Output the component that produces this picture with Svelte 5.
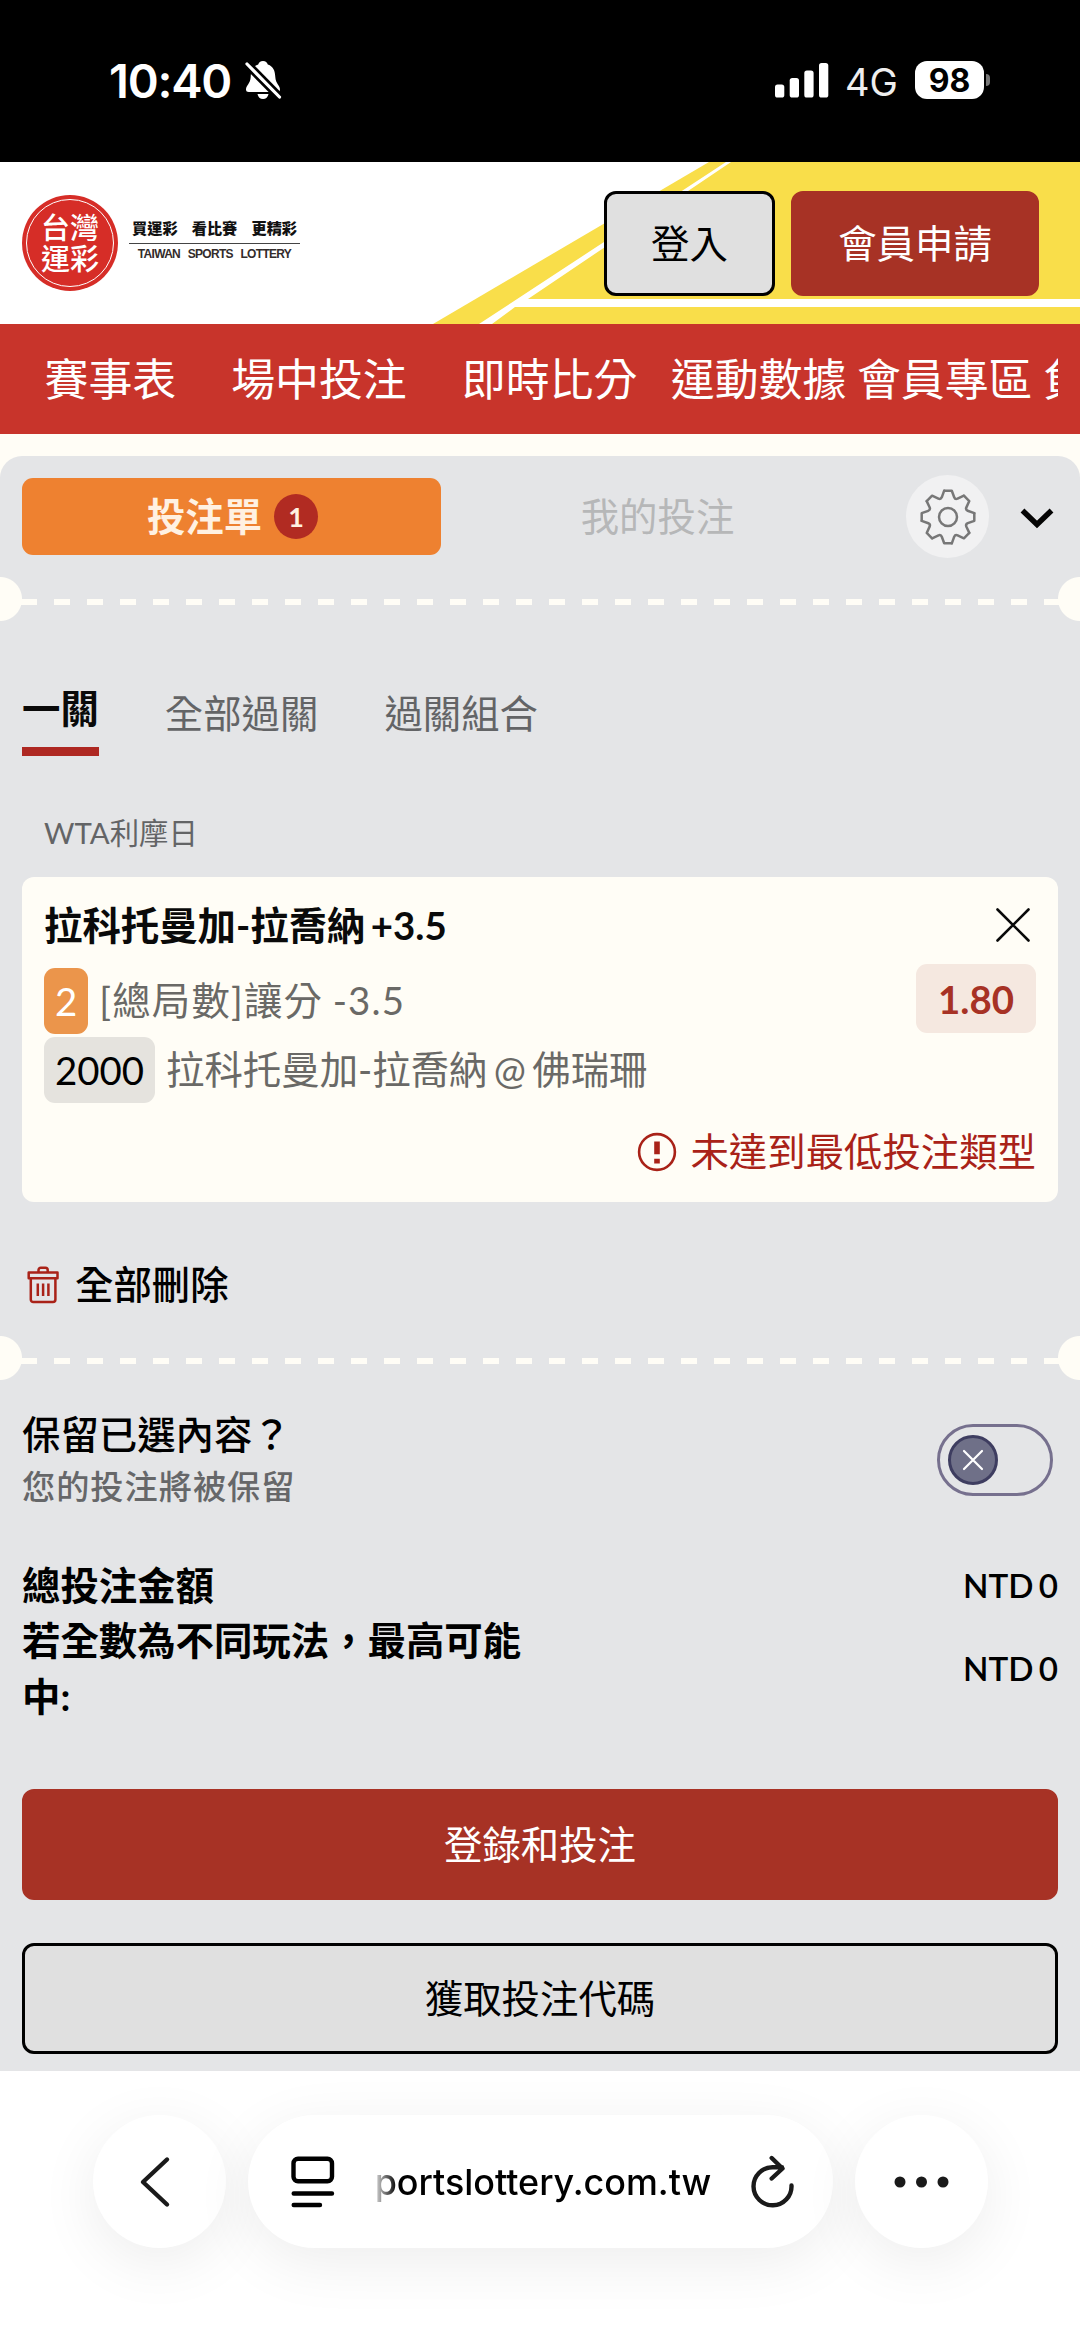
<script>
	let nav = ['賽事表', '場中投注', '即時比分', '運動數據', '會員專區', '負責任博彩']
	let types = ['一關', '全部過關', '過關組合']
	let active = 0
	let keep = false

	let bet = {
		league: 'WTA利摩日',
		pick: '拉科托曼加-拉喬納 +3.5',
		no: 2,
		market: '[總局數]讓分 -3.5',
		code: 2000,
		match: '拉科托曼加-拉喬納 @ 佛瑞珊',
		odds: '1.80'
	}

	let teeth = [0, 45, 90, 135, 180, 225, 270, 315]
</script>

<div class="phone">
	<div class="status">
		<span class="time">10:40</span>
		<svg class="bell" width="38" height="40" viewBox="0 0 38 40">
			<path d="M19 1c2.6 0 4.300 1.500 4.800 3.600C29.500 6.500 31 11 31.300 17c.3 6.500 4.700 8.500 4.700 12.500 0 1.700-1 2.500-2.800 2.500H4.800C3 32 2 31.200 2 29.500 2 25.500 6.400 23.500 6.700 17 7 11 8.500 6.500 14.200 4.600 14.700 2.500 16.400 1 19 1z" fill="#fff"/>
			<path d="M13.500 34h11c-.5 3-2.600 5-5.500 5s-5-2-5.500-5z" fill="#fff"/>
			<path d="M2.500 3.500l33 33.500" stroke="#000" stroke-width="8.500"/>
			<path d="M3 4l32.500 33" stroke="#fff" stroke-width="3.200" stroke-linecap="round"/>
		</svg>
		<svg class="signal" width="54" height="35" viewBox="0 0 54 35" fill="#fff">
			<rect x="0" y="21.500" width="9.300" height="13" rx="2.600"/>
			<rect x="14.700" y="15" width="9.300" height="19.500" rx="2.600"/>
			<rect x="29.300" y="7.500" width="9.300" height="27" rx="2.600"/>
			<rect x="44" y="0" width="9.300" height="34.500" rx="2.600"/>
		</svg>
		<span class="net">4G</span>
		<span class="battery">98</span>
		<span class="nub"></span>
	</div>

	<header>
		<svg class="stripes" width="1080" height="162" viewBox="0 0 1080 162">
			<path d="M433 162L709 0h371v162z" fill="#f9de4a"/>
			<path d="M479 162L726 0h5L528 137h552v8H515l-23 17z" fill="#fff"/>
		</svg>
		<div class="seal"><span>台灣</span><span>運彩</span></div>
		<div class="slogan">
			<div class="zh"><span>買運彩</span><span>看比賽</span><span>更精彩</span></div>
			<div class="en">TAIWAN SPORTS LOTTERY</div>
		</div>
		<button class="btn login">登入</button>
		<button class="btn red join">會員申請</button>
	</header>

	<nav>
		<ul>
			{#each nav as item}
			<li>{item}</li>
			{/each}
		</ul>
	</nav>

	<main>
		<div class="slip_head">
			<div class="tab on">投注單 <span class="count">1</span></div>
			<div class="tab">我的投注</div>
			<div class="gear">
				<svg width="60" height="60" viewBox="-30 -30 60 60" fill="none" stroke="#777" stroke-width="2.500" stroke-linejoin="round" stroke-linecap="round">
					<circle r="9"/>
					{#each teeth as deg}
					<path transform="rotate({deg})" d="M-3.800-26.300h7.600L6.200-19.800Q7.100-17.400 9.500-18.300L15.900-21.300"/>
					{/each}
				</svg>
			</div>
			<svg class="fold" width="34" height="22" viewBox="0 0 34 22">
				<path d="M2.500 2.500L17 16.500 31.500 2.500" fill="none" stroke="#050505" stroke-width="5.500"/>
			</svg>
		</div>

		<div class="tear"></div>

		<div class="types">
			{#each types as type, i}
			<div class="type" class:active={active === i}>{type}</div>
			{/each}
		</div>

		<div class="league">{bet.league}</div>
		<div class="card">
			<div class="row title">
				<span>{bet.pick}</span>
				<svg width="34" height="34" viewBox="0 0 34 34">
					<path d="M1.500 1.500l31 31M32.500 1.500l-31 31" stroke="#0a0a0a" stroke-width="2.600" stroke-linecap="round"/>
				</svg>
			</div>
			<div class="row">
				<span class="tag orange">{bet.no}</span>
				<span class="info wide">{bet.market}</span>
				<span class="odds">{bet.odds}</span>
			</div>
			<div class="row">
				<span class="tag">{bet.code}</span>
				<span class="info">{bet.match}</span>
			</div>
			<div class="warn">
				<svg width="40" height="40" viewBox="0 0 40 40">
					<circle cx="20" cy="20" r="17.900" fill="none" stroke="#a92218" stroke-width="2.600"/>
					<path d="M17.200 9.500h5.600v12.800h-5.600zM17.200 26.800h5.600v4.800h-5.600z" fill="#a92218"/>
				</svg>
				<span>未達到最低投注類型</span>
			</div>
		</div>

		<div class="clear">
			<svg width="32" height="38" viewBox="0 0 32 38" fill="none" stroke="#a92218" stroke-width="2.500" stroke-linejoin="round">
				<path d="M1.700 6.500h28.800v5.700H1.700z"/>
				<path d="M3.800 12.200v21.300a2.500 2.500 0 0 0 2.500 2.500h19.600a2.500 2.500 0 0 0 2.500-2.500V12.200"/>
				<path d="M11.500 6.500V4a2.300 2.300 0 0 1 2.300-2.300h4.600A2.300 2.300 0 0 1 20.700 4v2.500"/>
				<path d="M10.800 17.500v12.500M16.100 17.500v12.500M21.400 17.500v12.500"/>
			</svg>
			<span>全部刪除</span>
		</div>

		<div class="tear"></div>

		<div class="keep">
			<div>
				<div class="ask">保留已選內容？</div>
				<div class="note">您的投注將被保留</div>
			</div>
			<button class="switch" class:checked={keep} aria-label="保留已選內容" on:click={() => (keep = !keep)}>
				<span class="knob">
					<svg width="22" height="22" viewBox="0 0 22 22">
						<path d="M2 2l18 18M20 2L2 20" stroke="#fff" stroke-width="2.200" stroke-linecap="round"/>
					</svg>
				</span>
			</button>
		</div>

		<div class="sum">
			<span class="label">總投注金額</span>
			<span class="money">NTD 0</span>
		</div>
		<div class="sum">
			<span class="label">若全數為不同玩法，最高可能中:</span>
			<span class="money">NTD 0</span>
		</div>

		<button class="btn red submit">登錄和投注</button>
		<button class="btn submit">獲取投注代碼</button>
	</main>

	<footer>
		<div class="round">
			<svg class="back" width="34" height="54" viewBox="0 0 34 54">
				<path d="M28 4.500L4 27l24 22.500" fill="none" stroke="#1a1a1a" stroke-width="4.400" stroke-linecap="round" stroke-linejoin="round"/>
			</svg>
		</div>
		<div class="url">
			<svg width="44" height="52" viewBox="0 0 44 52" fill="none" stroke="#000" stroke-width="4.400" stroke-linecap="round">
				<rect x="2.500" y="2.700" width="38.500" height="22.500" rx="4.500"/>
				<path d="M2.700 37.500h38.300M2.700 49h26.300"/>
			</svg>
			<span class="host">portslottery.com.tw</span>
			<svg width="44" height="54" viewBox="0 0 44 54" fill="none" stroke="#1a1a1a" stroke-width="4.400" stroke-linecap="round" stroke-linejoin="round">
				<path d="M40.500 30.500A19 19 0 1 1 21.500 12.300H31M20.700 3L31.500 13.500 20.700 23.500"/>
			</svg>
		</div>
		<div class="round">
			<svg width="56" height="12" viewBox="0 0 56 12" fill="#1a1a1a">
				<circle cx="6" cy="6" r="5.500"/>
				<circle cx="27.500" cy="6" r="5.500"/>
				<circle cx="49" cy="6" r="5.500"/>
			</svg>
		</div>
	</footer>
</div>

<style>
	:global(body){
		margin: 0;
		background: #fff;
	}
	.phone{
		width: 1080px;
		height: 2341px;
		overflow: hidden;
		background: #fffdf6;
		color: #000;
		font-family: Lato, "Noto Sans CJK TC", sans-serif;
		font-size: 38.400px;
		line-height: 55px;
	}
	svg{
		display: block;
		flex: none;
	}
	button{
		font: inherit;
		color: inherit;
		padding: 0;
		margin: 0;
	}

	.status{
		height: 162px;
		box-sizing: border-box;
		padding: 0 90px 2px 109px;
		display: flex;
		align-items: center;
		background: #000;
		color: #fff;
		font-family: Inter, sans-serif;
	}
	.time{
		width: 135px;
		font-size: 47px;
		font-weight: 600;
		letter-spacing: -1.200px;
	}
	.signal{
		margin-left: auto;
	}
	.net{
		margin: 4px 0 0 16px;
		width: 70px;
		font-size: 38px;
		color: #eee;
	}
	.battery{
		width: 69px;
		height: 38px;
		border-radius: 12px;
		background: #fff;
		color: #000;
		font-size: 32px;
		font-weight: 700;
		line-height: 39px;
		text-align: center;
	}
	.nub{
		width: 4px;
		height: 12px;
		margin-left: 2px;
		border-radius: 0 4px 4px 0;
		background: #777;
	}

	header{
		position: relative;
		height: 162px;
		box-sizing: border-box;
		padding: 0 41px 0 22px;
		display: flex;
		align-items: center;
		background: #fff;
	}
	.stripes{
		position: absolute;
		left: 0;
		top: 0;
	}
	.seal{
		position: relative;
		width: 96px;
		height: 96px;
		border-radius: 50%;
		background: #d62d27;
		color: #fff;
		display: flex;
		flex-direction: column;
		align-items: center;
		justify-content: center;
		font-size: 29px;
		font-weight: 500;
		line-height: 31px;
	}
	.seal::after{
		content: "";
		position: absolute;
		inset: 4px;
		border: 1.500px solid #fff;
		border-radius: 50%;
	}
	.slogan{
		width: 171px;
		margin-left: 11px;
		color: #111;
	}
	.zh{
		display: flex;
		justify-content: space-between;
		padding: 0 3px 4px;
		border-bottom: 1px solid #444;
		font-size: 15.200px;
		font-weight: 900;
		line-height: 22px;
	}
	.en{
		padding-bottom: 5px;
		font: bold 12px/20px "Liberation Sans", sans-serif;
		letter-spacing: -0.700px;
		word-spacing: 5px;
		text-align: center;
		white-space: nowrap;
		color: #332c2b;
	}
	.btn{
		position: relative;
		box-sizing: border-box;
		border: 3px solid #000;
		border-radius: 12px;
		background: #e0e0e0;
		text-align: center;
	}
	.red{
		border-color: #a73225;
		background: #a73225;
		color: #fff;
	}
	.login{
		width: 171px;
		height: 105px;
		margin-left: auto;
	}
	.join{
		width: 248px;
		height: 105px;
		margin-left: 16px;
	}

	nav{
		height: 110px;
		padding: 0 22px;
		background: #c8342b;
		color: #fff;
	}
	ul{
		display: flex;
		overflow: hidden;
		margin: 0;
		padding: 0 0 0 22.500px;
		list-style: none;
		font-size: 43.900px;
		line-height: 110px;
		white-space: nowrap;
	}
	li{
		margin-right: 10.500px;
	}
	li:nth-child(-n+2){
		margin-right: 55px;
	}
	li:nth-child(3){
		margin-right: 33.500px;
	}

	main{
		height: 1615px;
		margin-top: 22px;
		box-sizing: border-box;
		padding: 19px 22px 0;
		border-radius: 22px 22px 0 0;
		background: #e4e5e7;
	}
	.slip_head{
		display: flex;
		align-items: center;
		height: 83px;
	}
	.tab{
		width: 419px;
		height: 77px;
		margin-right: 6px;
		box-sizing: border-box;
		padding-left: 2px;
		display: flex;
		align-items: center;
		justify-content: center;
		border-radius: 11px;
		color: #b6b7b8;
	}
	.tab.on{
		background: #ee8130;
		color: #fff1e2;
		font-weight: 700;
	}
	.count{
		width: 44px;
		height: 45px;
		margin-left: 12px;
		border-radius: 50%;
		background: #b12b22;
		font-size: 27px;
		font-weight: 700;
		line-height: 45px;
		text-align: center;
	}
	.gear{
		width: 83px;
		height: 83px;
		margin-left: 34px;
		display: flex;
		align-items: center;
		justify-content: center;
		border-radius: 50%;
		background: #f1f1f2;
	}
	.fold{
		margin: 4px 0 0 31px;
	}

	/* ticket edge: two notches and a dashed line */
	.tear{
		height: 44px;
		margin: 19px -22px 0;
		background:
			radial-gradient(circle at 0 50%, #fffdf6 21.500px, transparent 22.500px),
			radial-gradient(circle at 100% 50%, #fffdf6 21.500px, transparent 22.500px),
			repeating-linear-gradient(90deg, #fffdf6 0 16.500px, transparent 16.500px 33px) 20.500px 22px / 1040px 6px no-repeat;
	}

	.types{
		display: flex;
		gap: 66px;
		margin-top: 58px;
		height: 77px;
	}
	.type{
		padding-top: 7px;
		color: #636466;
	}
	.type.active{
		box-sizing: border-box;
		height: 77px;
		padding: 2px 0 0;
		border-bottom: 9px solid #ae2822;
		color: #0a0a0a;
		font-weight: 700;
	}
	.league{
		margin: 49px 22px 0;
		font-size: 29.400px;
		color: #636466;
	}
	.card{
		height: 325px;
		margin-top: 17px;
		box-sizing: border-box;
		padding: 15px 22px 0;
		border-radius: 12px;
		background: #fffdf6;
	}
	.row{
		display: flex;
		align-items: center;
		height: 69px;
	}
	.title{
		height: 74px;
		padding: 0 6px 0 0;
		justify-content: space-between;
		color: #0a0a0a;
		font-weight: 700;
		word-spacing: -4px;
	}
	.title svg{
		margin-bottom: 8px;
	}
	.title span{
		margin-bottom: 8px;
	}
	.tag{
		height: 66px;
		padding: 0 11px;
		border-radius: 11px;
		background: #e5e3de;
		line-height: 66px;
	}
	.orange{
		background: #eb954b;
		color: #fff;
	}
	.info{
		margin-left: 11px;
		color: #6a6966;
		word-spacing: -3.500px;
	}
	.wide{
		letter-spacing: 1.200px;
		word-spacing: -1.500px;
	}
	.odds{
		width: 120px;
		height: 69px;
		margin: -5px 0 0 auto;
		border-radius: 11px;
		background: #f5e8e0;
		color: #a73225;
		font-weight: 700;
		line-height: 70px;
		text-align: center;
	}
	.warn{
		display: flex;
		align-items: center;
		justify-content: flex-end;
		gap: 13px;
		margin-top: 20px;
		color: #a92218;
	}

	.clear{
		display: flex;
		align-items: center;
		gap: 16px;
		padding-left: 5px;
		margin-top: 55px;
		font-weight: 500;
	}
	.clear + .tear{
		margin-top: 24px;
	}
	.keep{
		display: flex;
		align-items: center;
		justify-content: space-between;
		height: 108px;
		margin-top: 26px;
		padding-right: 5px;
	}
	.ask{
		margin-top: -3px;
		font-weight: 500;
	}
	.note{
		font-size: 33.200px;
		font-weight: 500;
		letter-spacing: 1px;
		line-height: 48px;
		color: #666769;
	}
	.switch{
		width: 116px;
		height: 72px;
		border: 3px solid #76708e;
		border-radius: 36px;
		background: none;
		display: flex;
		align-items: center;
		padding: 0 8px;
	}
	.checked{
		justify-content: flex-end;
	}
	.knob{
		width: 50px;
		height: 50px;
		box-sizing: border-box;
		display: flex;
		align-items: center;
		justify-content: center;
		border: 3px solid #3e3d60;
		border-radius: 50%;
		background: #6f7088;
	}
	.sum{
		display: flex;
		align-items: center;
		justify-content: space-between;
		line-height: 55.300px;
	}
	.keep + .sum{
		margin-top: 44px;
	}
	.label{
		width: 518px;
		font-weight: 700;
	}
	.money{
		font-size: 33.200px;
		font-weight: 600;
		word-spacing: -3px;
	}
	.submit{
		display: block;
		width: 1036px;
		height: 111px;
		margin-top: 43px;
	}
	.sum + .submit{
		margin-top: 65px;
	}

	footer{
		height: 270px;
		box-sizing: border-box;
		padding: 44px 92px 0 93px;
		display: flex;
		gap: 22px;
		background: #fff;
	}
	.round, .url{
		width: 133px;
		height: 133px;
		display: flex;
		align-items: center;
		justify-content: center;
		border-radius: 67px;
		background: #fff;
		box-shadow: 0 14px 60px rgba(0, 0, 0, 0.075);
	}
	.back{
		margin-right: 7px;
	}
	.url{
		width: 585px;
		box-sizing: border-box;
		padding: 0 38px 0 43px;
		justify-content: space-between;
	}
	.host{
		font: 500 35.900px/50px Inter, sans-serif;
		-webkit-mask-image: linear-gradient(90deg, rgba(0, 0, 0, 0.15), #000 22px);
		mask-image: linear-gradient(90deg, rgba(0, 0, 0, 0.15), #000 22px);
	}
</style>
